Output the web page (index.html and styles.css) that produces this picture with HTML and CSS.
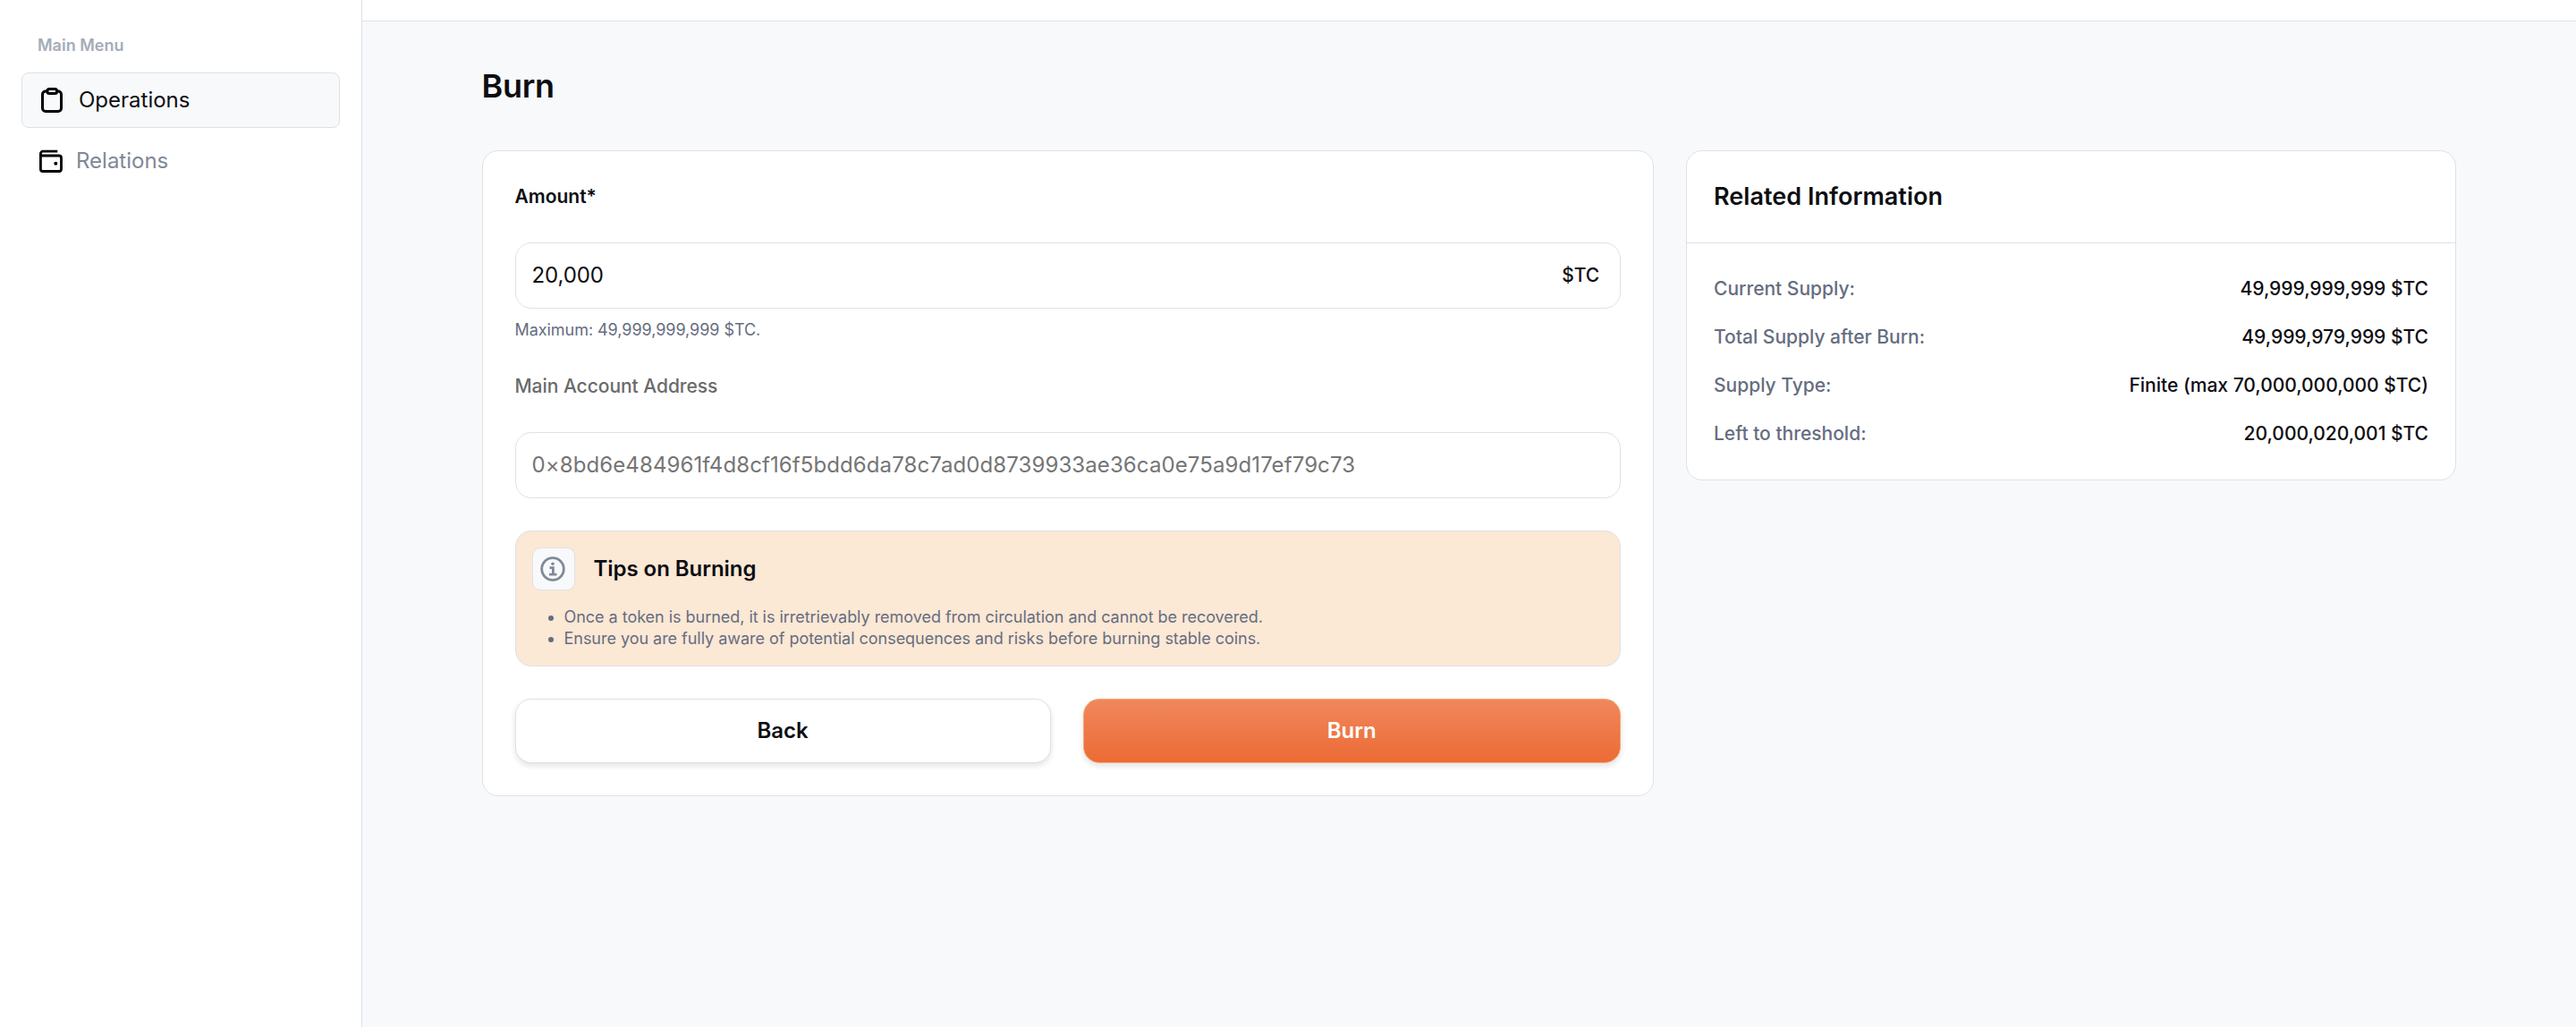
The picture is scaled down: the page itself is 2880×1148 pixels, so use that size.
FILE: index.html
```html
<!DOCTYPE html>
<html lang="en">
<head>
<meta charset="utf-8">
<title>Burn</title>
<link rel="stylesheet" href="styles.css">
</head>
<body>
<div class="app">
  <aside class="sidebar">
    <div class="menu-title">Main Menu</div>
    <nav class="menu">
      <a class="item active">
        <svg class="icon clip" viewBox="0 0 24 28" fill="none" stroke="#000" stroke-width="3"><rect x="1.5" y="4" width="21" height="22.5" rx="3.5"/><rect x="7" y="1.5" width="10.5" height="5" rx="2" fill="#f8f9fb"/></svg>
        <span>Operations</span>
      </a>
      <a class="item">
        <svg class="icon wallet" viewBox="0 0 26 26" fill="none" stroke="#000" stroke-width="2.8"><path d="M20.300 2.200H4.200A2.500 2.500 0 0 0 1.400 4.500V22A2.500 2.500 0 0 0 3.900 24.500H22A2.500 2.500 0 0 0 24.500 22V9.500A2.500 2.500 0 0 0 22 7H3.900A2.300 2.300 0 0 1 1.400 4.700"/><circle cx="18.300" cy="15.700" r="2" fill="#000" stroke="none"/></svg>
        <span>Relations</span>
      </a>
    </nav>
  </aside>
  <div class="page">
    <header class="topbar"></header>
    <main class="content">
      <h1 class="heading">Burn</h1>
      <div class="columns">
        <section class="card form">
          <div class="label">Amount*</div>
          <div class="input amount"><span>20,000</span><span class="unit">$TC</span></div>
          <div class="hint">Maximum: 49,999,999,999 $TC.</div>
          <div class="label muted">Main Account Address</div>
          <div class="input address">0×8bd6e484961f4d8cf16f5bdd6da78c7ad0d8739933ae36ca0e75a9d17ef79c73</div>
          <div class="tips">
            <div class="tips-head">
              <span class="badge"><svg class="info" viewBox="0 0 28 28" fill="none" stroke="#808997" stroke-width="2.800"><circle cx="14" cy="14" r="12.300"/><path d="M10.500 12.700H14.400V20M10 20.200H18.500"/><circle cx="14" cy="8.200" r="1.800" fill="#808997" stroke="none"/></svg></span>
              <span>Tips on Burning</span>
            </div>
            <ul class="tips-list">
              <li>Once a token is burned, it is irretrievably removed from circulation and cannot be recovered.</li>
              <li>Ensure you are fully aware of potential consequences and risks before burning stable coins.</li>
            </ul>
          </div>
          <div class="actions">
            <button class="btn back">Back</button>
            <button class="btn primary">Burn</button>
          </div>
        </section>
        <section class="card info-card">
          <h2 class="info-title">Related Information</h2>
          <div class="rows">
            <div class="row"><span class="key">Current Supply:</span><span>49,999,999,999 $TC</span></div>
            <div class="row"><span class="key">Total Supply after Burn:</span><span>49,999,979,999 $TC</span></div>
            <div class="row"><span class="key">Supply Type:</span><span>Finite (max 70,000,000,000 $TC)</span></div>
            <div class="row"><span class="key">Left to threshold:</span><span>20,000,020,001 $TC</span></div>
          </div>
        </section>
      </div>
    </main>
  </div>
</div>
</body>
</html>
```
FILE: styles.css
```css
* { box-sizing: border-box; }
body { margin: 0; font-family: Inter, "Liberation Sans", sans-serif; color: #0d0e12; background: #f8f9fb; }
.app { display: flex; height: 1148px; }
.sidebar { width: 405px; flex: none; background: #fff; border-right: 1px solid #dfe1e7; padding: 39px 24px 0; }
.menu-title { font-size: 18px; font-weight: 600; line-height: 24px; padding-left: 18px; color: #a4acb9; }
.menu { display: flex; flex-direction: column; gap: 6px; margin-top: 18px; }
.item { display: flex; align-items: center; height: 62px; padding-left: 18px; font-size: 24px; color: #808897; border-radius: 8px; }
.item.active { color: #0d0e12; background: #f8f9fb; border: 1px solid #dfe1e7; padding-left: 21px; }
.item span { padding-bottom: 1px; }
.icon { display: block; flex: none; }
.clip { width: 24px; height: 28px; margin-right: 18px; }
.wallet { width: 26px; height: 26px; margin-right: 15.4px; margin-left: 1.6px; }
.page { flex: 1; display: flex; flex-direction: column; }
.topbar { height: 24px; background: #fff; border-bottom: 1px solid #dfe1e7; }
.content { padding: 48px 134px 0; }
.heading { margin: 0 0 48px -.5px; font-size: 36px; line-height: 48px; font-weight: 600; letter-spacing: -.3px; }
.columns { display: flex; align-items: flex-start; gap: 36px; }
.card { background: #fff; border: 1px solid #dfe1e7; border-radius: 18px; }
.form { width: 1310px; flex: none; height: 722px; padding: 36px 36px 36px 35.5px; }
.label { font-size: 21px; line-height: 30px; font-weight: 600; margin: 0 0 36px; }
.label.muted { font-weight: 500; color: #6a6a6a; margin: 36px 0 36px; letter-spacing: -.04px; }
.input { display: flex; align-items: center; justify-content: space-between; height: 74px; border: 1px solid #dfe1e7; border-radius: 18px; padding: 0 23px 2px 18px; font-size: 24px; }
.amount { letter-spacing: -.1px; }
.unit { font-size: 21px; font-weight: 500; }
.address { color: #757575; letter-spacing: .1px; }
.hint { margin-top: 12px; font-size: 18px; line-height: 24px; color: #666d80; letter-spacing: -.05px; }
.tips { margin-top: 36px; height: 152px; border: 1px solid #dfe1e7; border-radius: 18px; background: #fbe8d5; padding: 18px; }
.tips-head { display: flex; align-items: center; gap: 21px; font-size: 24px; font-weight: 600; line-height: 48px; letter-spacing: -.05px; }
.badge { display: flex; align-items: center; width: 48px; height: 48px; padding-left: 8px; background: #f8f9fb; border: 1px solid #dfe1e7; border-radius: 9px; }
.info { width: 28px; height: 28px; display: block; }
.tips-list { margin: 18px 0 0; padding-left: 36px; font-size: 18px; line-height: 24px; color: #666d80; letter-spacing: -.03px; }
.actions { display: flex; gap: 36px; margin-top: 36px; }
.btn { flex: 1; height: 72px; padding: 0 0 2px; border: 1px solid #dfe1e7; border-radius: 18px; background: #fff; color: #0d0e12; font-family: inherit; font-size: 24px; font-weight: 600; box-shadow: 0 3px 6px rgba(13, 13, 18, .12); }
.btn.back { flex: 0 0 599px; }
.btn.primary { color: #fff; border-color: #f5a86c; background: linear-gradient(#f0875d, #ec6b35); }
.info-card { flex: 1; height: 369px; }
.info-title { margin: 0; height: 103px; border-bottom: 1px solid #dfe1e7; padding: 0 30px; font-size: 27px; line-height: 101px; font-weight: 600; letter-spacing: .04px; }
.rows { display: flex; flex-direction: column; gap: 24px; padding: 36px 30px; }
.row { display: flex; justify-content: space-between; font-size: 21px; line-height: 30px; font-weight: 500; }
.key { color: #666d80; }
```
